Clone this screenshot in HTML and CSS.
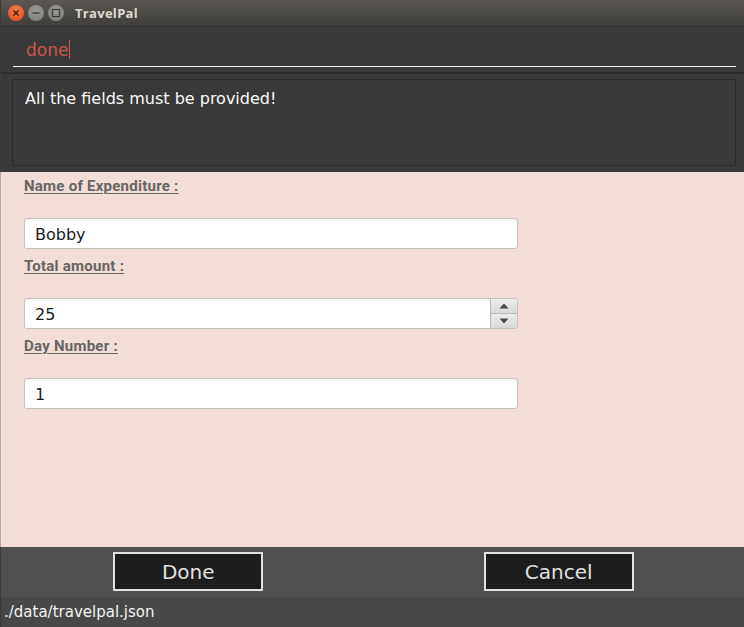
FILE: index.html
```html
<!DOCTYPE html>
<html>
<head>
<meta charset="utf-8">
<title>TravelPal</title>
<link rel="stylesheet" href="styles.css">
</head>
<body>
<div class="window">
  <div class="titlebar">
    <div class="winbtns">
      <span class="wb close"><svg width="16" height="16" viewBox="0 0 16 16"><path d="M5.5 5.5 L10.5 10.5 M10.5 5.5 L5.5 10.5" stroke="#3a1a10" stroke-width="1.3"/></svg></span>
      <span class="wb"><svg width="16" height="16" viewBox="0 0 16 16"><path d="M4.5 8 H11.5" stroke="#3a3a38" stroke-width="1.3"/></svg></span>
      <span class="wb"><svg width="16" height="16" viewBox="0 0 16 16"><rect x="4.5" y="4.5" width="7" height="7" fill="none" stroke="#3a3a38" stroke-width="1.2"/></svg></span>
    </div>
    <div class="title">TravelPal</div>
  </div>
  <div class="command">
    <div class="cmdfield"><span class="cmdtext">done</span><span class="caret"></span></div>
  </div>
  <div class="result">
    <div class="resultbox">All the fields must be provided!</div>
  </div>
  <div class="form">
    <div class="field">
      <div class="label">Name of Expenditure :</div>
      <div class="input">Bobby</div>
    </div>
    <div class="field">
      <div class="label">Total amount :</div>
      <div class="input spinner">
        <span class="val">25</span>
        <div class="spinbtns">
          <div class="sb"><svg width="10" height="6" viewBox="0 0 10 6"><path d="M0.5 5.5 L5 0.5 L9.5 5.5 Z" fill="#4a4a4a"/></svg></div>
          <div class="sb"><svg width="10" height="6" viewBox="0 0 10 6"><path d="M0.5 0.5 L5 5.5 L9.5 0.5 Z" fill="#4a4a4a"/></svg></div>
        </div>
      </div>
    </div>
    <div class="field">
      <div class="label">Day Number :</div>
      <div class="input">1</div>
    </div>
  </div>
  <div class="buttonbar">
    <div class="cell"><div class="btn">Done</div></div>
    <div class="cell"><div class="btn">Cancel</div></div>
  </div>
  <div class="status">./data/travelpal.json</div>
</div>
</body>
</html>
```

FILE: styles.css
```css
html, body {
  margin: 0;
  padding: 0;
}
body {
  width: 744px;
  height: 627px;
  overflow: hidden;
  background: #3a3a3a;
  font-family: "DejaVu Sans", sans-serif;
}
.window {
  display: flex;
  flex-direction: column;
  height: 627px;
  border-left: 1px solid #3b3b38;
}
.titlebar {
  height: 26px;
  background: linear-gradient(#5b5852, #3f3e3a);
  border-bottom: 1px solid #2e2e2c;
  display: flex;
  align-items: center;
}
.winbtns {
  display: flex;
  gap: 4px;
  margin-left: 7px;
}
.wb {
  width: 16px;
  height: 16px;
  border-radius: 50%;
  background: radial-gradient(circle at 50% 35%, #9a9892, #7c7a75);
  display: block;
}
.wb svg { display: block; }
.wb.close {
  background: radial-gradient(circle at 50% 35%, #f47a4e, #de4a1c);
}
.title {
  margin-left: 11px;
  font-family: "Open Sans", "DejaVu Sans", sans-serif;
  font-weight: 700;
  font-size: 13px;
  color: #dcd8cf;
  letter-spacing: 0.3px;
}
.command {
  height: 45px;
  background: #3a3a3a;
  border-bottom: 2px solid #2c2c2c;
  padding: 0 8px 0 12px;
}
.cmdfield {
  height: 40px;
  border-bottom: 1px solid #f0f0f0;
  display: flex;
  align-items: center;
  padding-left: 13px;
  padding-top: 6px;
  box-sizing: border-box;
}
.cmdtext {
  font-size: 17px;
  color: #c9574a;
}
.caret {
  width: 1px;
  height: 19px;
  background: #c9574a;
  margin-left: 1px;
}
.result {
  height: 98px;
  background: #393939;
  padding: 5px 8px 6px 11px;
  box-sizing: border-box;
}
.resultbox {
  height: 87px;
  border: 1px solid #2a2a2a;
  box-sizing: border-box;
  padding: 9px 12px 0;
  color: #fafafa;
  font-size: 16px;
}
.form {
  flex: 1;
  background: #f2ded7;
  border-left: 1px solid #b0aaa6;
  margin-left: -1px;
  padding: 5px 0 0 23px;
}
.field {
  width: 494px;
  margin-bottom: 8px;
}
.label {
  font-family: "Roboto", sans-serif;
  font-weight: 700;
  font-size: 15px;
  letter-spacing: 0.25px;
  line-height: 18px;
  height: 18px;
  color: #666;
  text-decoration: underline;
  text-decoration-thickness: 1px;
  text-underline-offset: 2px;
  margin-bottom: 23px;
}
.input {
  height: 31px;
  box-sizing: border-box;
  border: 1px solid #c2c2c2;
  border-radius: 3px;
  background: linear-gradient(#f3f3f3, #ffffff 4px);
  padding: 1px 10px 0;
  font-size: 16px;
  color: #1a1a1a;
  display: flex;
  align-items: center;
}
.spinner {
  padding: 0 0 0 10px;
  justify-content: space-between;
}
.spinner .val { padding-top: 1px; }
.spinbtns {
  width: 26px;
  height: 29px;
  display: flex;
  flex-direction: column;
  border-left: 1px solid #b8b8b8;
}
.sb {
  flex: 1;
  background: linear-gradient(#ececec, #d9d9d9);
  display: flex;
  align-items: center;
  justify-content: center;
}
.sb + .sb { border-top: 1px solid #b8b8b8; }
.sb svg { display: block; }
.buttonbar {
  height: 50px;
  background: #50504e;
  display: flex;
  padding-left: 2px;
}
.cell {
  flex: 1;
  display: flex;
  justify-content: center;
  padding-top: 5px;
}
.btn {
  width: 150px;
  height: 39px;
  box-sizing: border-box;
  border: 2px solid #e2e2e2;
  background: #1d1d1d;
  color: #e0e0e0;
  font-size: 20px;
  display: flex;
  align-items: center;
  justify-content: center;
}
.status {
  height: 30px;
  background: #484848;
  color: #f2f2f2;
  font-size: 15px;
  line-height: 30px;
  padding-left: 3px;
}
```
